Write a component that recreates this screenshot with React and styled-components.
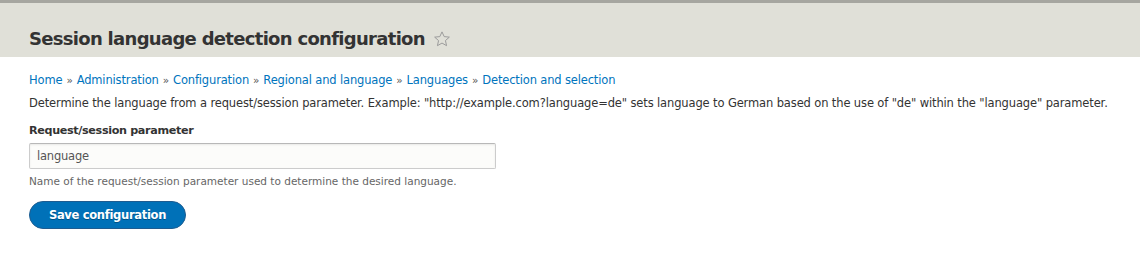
import React from "react";
import styled, { createGlobalStyle } from "styled-components";

const Global = createGlobalStyle`
  html, body { margin: 0; padding: 0; background: #fff; }
  body { font-family: "DejaVu Sans", Verdana, sans-serif; color: #333; }
`;

const Page = styled.div`
  width: 1140px;
  height: 264px;
  overflow: hidden;
  display: flex;
  flex-direction: column;
`;

const Header = styled.header`
  background: #e0e0d8;
  border-top: 3px solid #a6a6a0;
  height: 57px;
  padding: 0 29px 5px;
  display: flex;
  align-items: flex-end;
  box-sizing: border-box;
`;

const Title = styled.h1`
  margin: 0;
  font-size: 18px;
  line-height: 26px;
  font-weight: bold;
  color: #333;
  letter-spacing: -0.7px;
  display: flex;
  align-items: center;
  gap: 8px;
`;

const Content = styled.main`
  padding: 14px 29px 0;
  display: flex;
  flex-direction: column;
`;

const Breadcrumb = styled.nav`
  font-size: 11.5px;
  letter-spacing: -0.15px;
  line-height: 18px;
  color: #333;
  a { color: #0074bd; text-decoration: none; }
`;

const Sep = styled.span`
  color: #555;
  margin: 0 4px;
  font-size: 10.5px;
`;

const Para = styled.p`
  margin: 5px 0 0;
  font-size: 11.5px;
  letter-spacing: -0.13px;
  line-height: 18px;
  color: #333;
  white-space: nowrap;
`;

const Field = styled.div`
  margin-top: 11px;
  display: flex;
  flex-direction: column;
`;

const Label = styled.label`
  font-size: 11.2px;
  letter-spacing: -0.35px;
  font-weight: bold;
  line-height: 16px;
  color: #333;
  margin-bottom: 4px;
`;

const Input = styled.input`
  width: 467px;
  height: 26px;
  box-sizing: border-box;
  border: 1px solid #ccc;
  border-top-color: #b8b8b8;
  border-radius: 2px;
  background: #fcfcfa;
  padding: 0 7px;
  font-family: inherit;
  font-size: 11.5px;
  letter-spacing: -0.2px;
  color: #555;
  outline: none;
  box-shadow: inset 0 1px 2px rgba(0, 0, 0, 0.08);
`;

const Help = styled.div`
  margin-top: 5px;
  font-size: 10.5px;
  line-height: 14px;
  color: #666;
`;

const Button = styled.button`
  margin-top: 13px;
  align-self: flex-start;
  background: #0071b8;
  border: 1px solid #1e5c90;
  border-radius: 20px;
  color: #fff;
  font-family: inherit;
  font-weight: bold;
  font-size: 11.5px;
  height: 28px;
  width: 157px;
  padding: 0;
  letter-spacing: -0.3px;
  text-shadow: 0 1px 0 rgba(0,0,0,0.3);
`;

const Star = () => (
  <svg width="18" height="18" viewBox="0 0 24 24" fill="none" stroke="#999" strokeWidth="1.3" strokeLinejoin="round">
    <path d="M12 2.5l2.9 6.3 6.9.7-5.2 4.6 1.5 6.8L12 17.4l-6.1 3.5 1.5-6.8-5.2-4.6 6.9-.7z" />
  </svg>
);

const crumbs = ["Home", "Administration", "Configuration", "Regional and language", "Languages", "Detection and selection"];

export default function App() {
  return (
    <Page>
      <Global />
      <Header>
        <Title>
          Session language detection configuration
          <Star />
        </Title>
      </Header>
      <Content>
        <Breadcrumb>
          {crumbs.map((c, i) => (
            <React.Fragment key={c}>
              {i > 0 && <Sep>»</Sep>}
              <a href="#">{c}</a>
            </React.Fragment>
          ))}
        </Breadcrumb>
        <Para>
          Determine the language from a request/session parameter. Example: "http://example.com?language=de" sets language to German based on the use of "de" within the "language" parameter.
        </Para>
        <Field>
          <Label htmlFor="param">Request/session parameter</Label>
          <Input id="param" defaultValue="language" />
          <Help>Name of the request/session parameter used to determine the desired language.</Help>
        </Field>
        <Button>Save configuration</Button>
      </Content>
    </Page>
  );
}
